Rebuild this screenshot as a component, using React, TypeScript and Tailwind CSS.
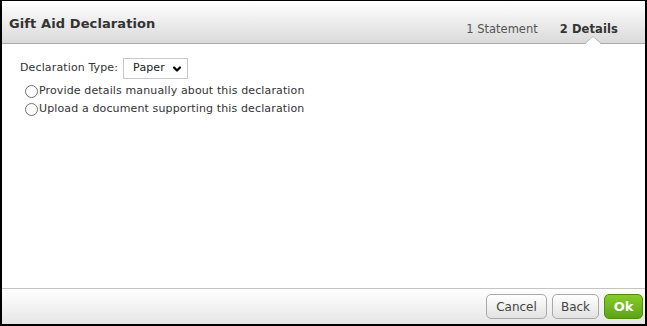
import { ChevronDown } from 'lucide-react'

function Radio({ label }: { label: string }) {
  return (
    <label className="flex items-center h-[18px]">
      <span className="w-[13px] h-[13px] rounded-full border border-[#707070] bg-white mr-[1px]" />
      <span>{label}</span>
    </label>
  )
}

export default function App() {
  return (
    <div
      className="w-[647px] h-[326px] flex flex-col bg-white border-x-2 border-t border-b-2 border-black text-[#333] overflow-hidden"
      style={{ fontFamily: '"DejaVu Sans", Verdana, sans-serif' }}
    >
      {/* Header */}
      <div className="relative h-[43px] shrink-0 flex items-center justify-between pl-[7px] pr-[27px] bg-gradient-to-b from-[#ffffff] to-[#dadada] border-b border-[#a8a8a8]">
        <h1 className="text-[13px] font-bold text-[#333] tracking-[0.1px] pt-[3px]">Gift Aid Declaration</h1>
        <div className="flex items-center gap-[22px] text-[11.5px] pt-[15px]">
          <span className="text-[#555]">1 Statement</span>
          <span className="font-bold text-[#333] tracking-[0.1px]">2 Details</span>
        </div>
        <svg className="absolute right-[44px] bottom-[-1px]" width="16" height="8" viewBox="0 0 16 8">
          <polygon points="0,8 8,0 16,8" fill="#ffffff" />
          <polyline points="0,7.5 8,0.5 16,7.5" fill="none" stroke="#b8b8b8" strokeWidth="1" />
        </svg>
      </div>

      {/* Body */}
      <div className="flex-1 pt-[14px] pl-[18px] text-[11px] tracking-[0.13px]">
        <div className="flex items-center gap-[5px]">
          <span>Declaration Type:</span>
          <div className="w-[65px] h-[21px] border border-[#c8c8c8] bg-white flex items-center justify-between pl-[9px] pr-[4px] text-[#222]">
            <span>Paper</span>
            <ChevronDown size={12} strokeWidth={4.5} className="text-black" />
          </div>
        </div>
        <div className="mt-[3px] pl-[5px]">
          <Radio label="Provide details manually about this declaration" />
          <Radio label="Upload a document supporting this declaration" />
        </div>
      </div>

      {/* Footer */}
      <div className="h-[36px] shrink-0 flex items-center justify-end gap-[5px] pr-[2px] border-t border-[#c4c4c4] bg-gradient-to-b from-[#ffffff] to-[#e6e6e6] text-[12px]">
        <button className="h-[25px] w-[61px] rounded-[5px] border border-[#a9a9a9] bg-gradient-to-b from-[#ffffff] to-[#e2e2e2] text-[#444]">
          Cancel
        </button>
        <button className="h-[25px] w-[47px] rounded-[5px] border border-[#a9a9a9] bg-gradient-to-b from-[#ffffff] to-[#e2e2e2] text-[#444]">
          Back
        </button>
        <button className="h-[25px] w-[39px] rounded-[5px] border border-[#4f8d0e] bg-gradient-to-b from-[#86cc2a] to-[#5ea413] text-white font-bold text-[13px]">
          Ok
        </button>
      </div>
    </div>
  )
}
